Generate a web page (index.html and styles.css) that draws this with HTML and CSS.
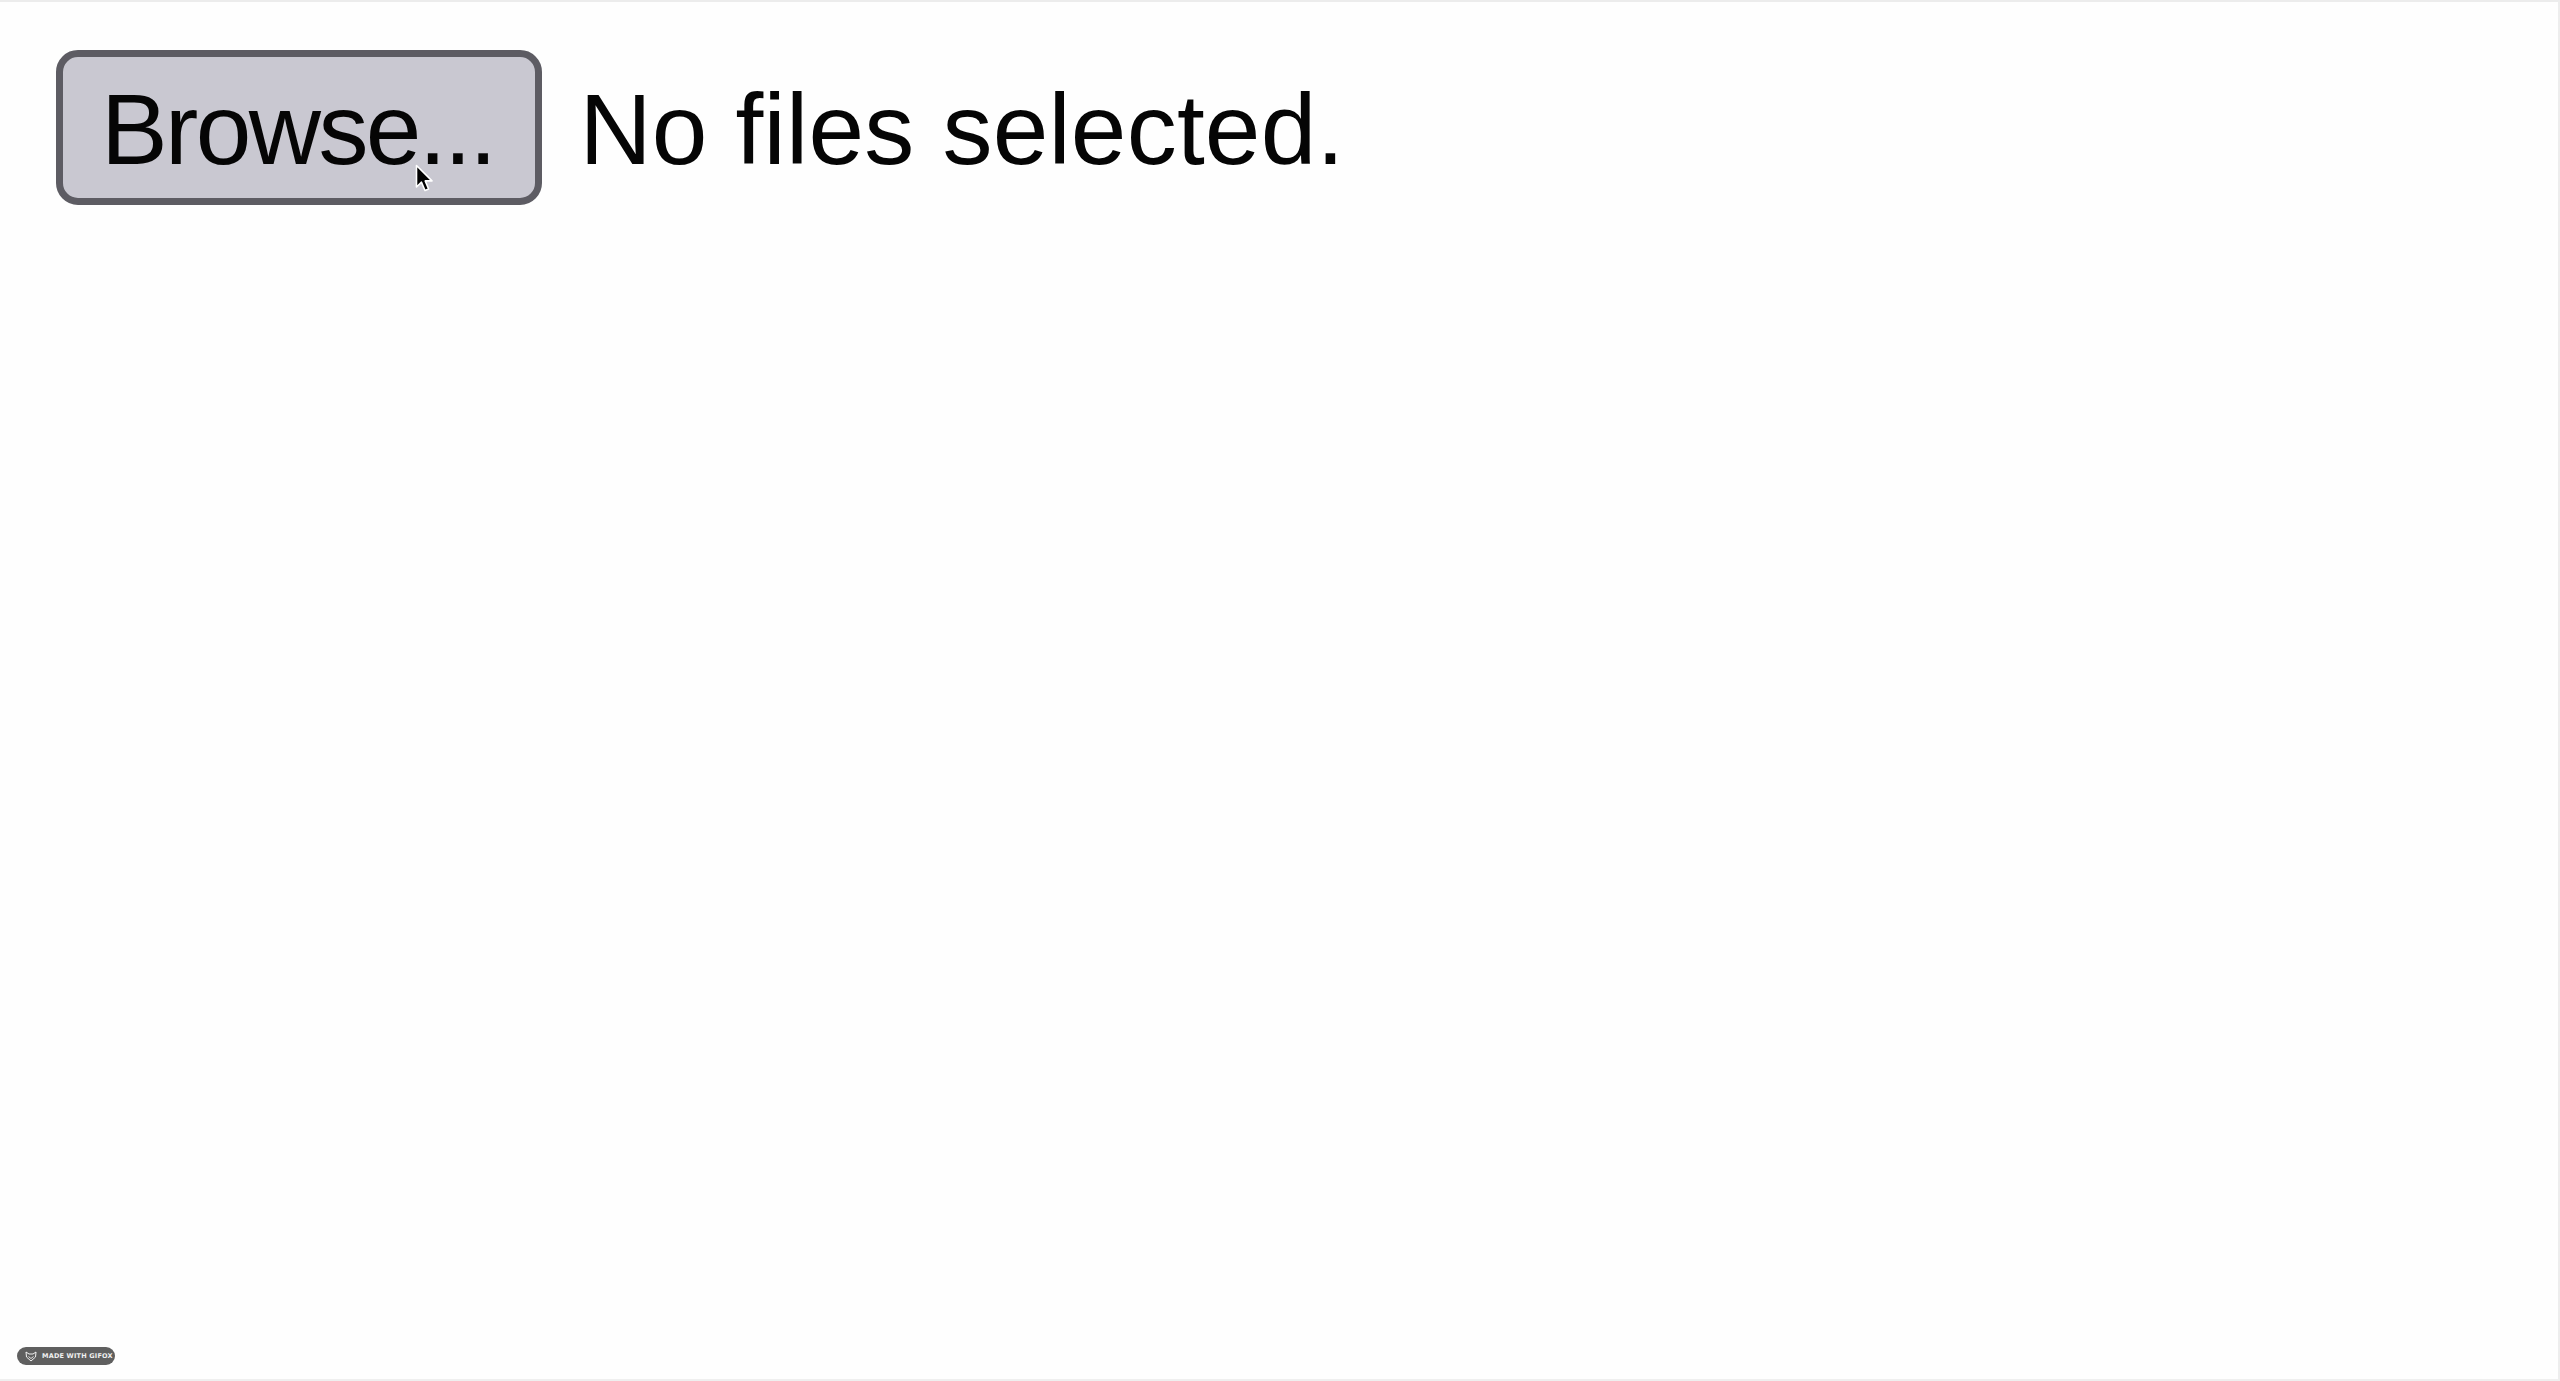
FILE: index.html
```html
<!DOCTYPE html>
<html lang="en">
<head>
<meta charset="utf-8">
<title>File input</title>
<link rel="stylesheet" href="styles.css">
</head>
<body>
<div class="frame">
  <div class="row">
    <span class="browse">Browse...</span>
    <span class="status">No files selected.</span>
  </div>
  <svg class="cursor" width="20" height="30" viewBox="0 0 20 30" aria-hidden="true">
    <path d="M1.5 1.5 L1.5 23 L6.5 18.2 L10 26.5 L13.6 25 L10.2 16.9 L17 16.9 Z" fill="#000" stroke="#fff" stroke-width="1.6" stroke-linejoin="round"/>
  </svg>
  <div class="badge">
    <svg class="fox" width="12" height="11" viewBox="0 0 12 11" aria-hidden="true">
      <path d="M1 1 L4 3 L8 3 L11 1 L10.5 6 L6 10 L1.5 6 Z" fill="none" stroke="#f2f2f2" stroke-width="1" stroke-linejoin="round"/>
      <path d="M3.5 5.5 L6 7.5 L8.5 5.5" fill="none" stroke="#f2f2f2" stroke-width="0.9"/>
    </svg>
    <span class="badge-text">MADE WITH GIFOX</span>
  </div>
</div>
</body>
</html>
```

FILE: styles.css
```css
html, body {
  margin: 0;
  padding: 0;
  background: #fefefe;
}

.frame {
  position: relative;
  box-sizing: border-box;
  height: 100vh;
  border-top: 2px solid #ececec;
  border-right: 2px solid #ededed;
  border-bottom: 2px solid #efefef;
  padding: 48px 0 0 56px;
}

.row {
  display: flex;
  align-items: center;
  gap: 37px;
  font-family: "Liberation Sans", Arial, sans-serif;
  font-size: 100px;
  line-height: 115px;
  color: #050505;
}

.browse {
  display: block;
  background: #c9c8d1;
  border: 7px solid #5d5c63;
  border-radius: 22px;
  padding: 15px 41px 11px 38px;
  letter-spacing: -2.6px;
}

.status {
  display: block;
  padding-top: 4px;
  letter-spacing: 0.2px;
}

.cursor {
  position: absolute;
  left: 415px;
  top: 162px;
}

.badge {
  position: absolute;
  left: 17px;
  top: 1345px;
  width: 98px;
  height: 18px;
  border-radius: 9px;
  background: #5f5f5f;
  display: flex;
  align-items: center;
  gap: 5px;
  padding-left: 8px;
  box-sizing: border-box;
}

.fox {
  display: block;
}

.badge-text {
  font-family: "DejaVu Sans", "Liberation Sans", sans-serif;
  font-weight: bold;
  font-size: 6.5px;
  letter-spacing: 0.2px;
  color: #f0f0f0;
  white-space: nowrap;
}
```
